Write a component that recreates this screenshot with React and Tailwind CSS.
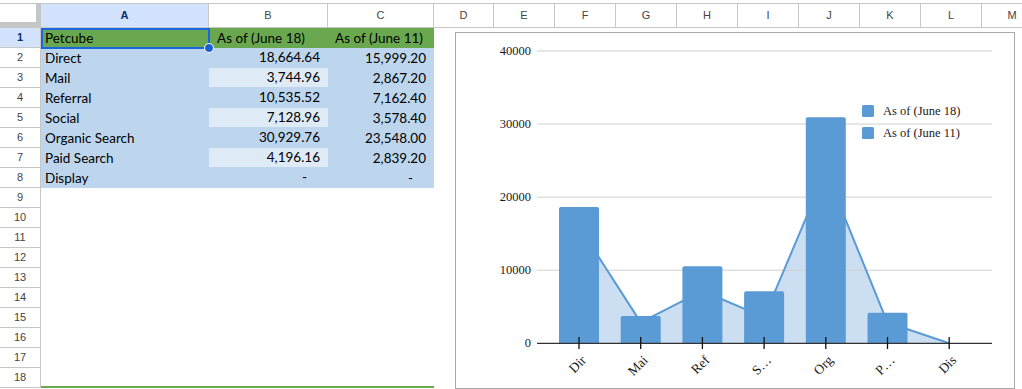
import React from 'react';

const COLS = [
  { id: 'A', w: 'w-[168px]' },
  { id: 'B', w: 'w-[119px]' },
  { id: 'C', w: 'w-[106px]' },
  { id: 'D', w: 'w-[60px]' },
  { id: 'E', w: 'w-[61px]' },
  { id: 'F', w: 'w-[61px]' },
  { id: 'G', w: 'w-[61px]' },
  { id: 'H', w: 'w-[61px]' },
  { id: 'I', w: 'w-[61px]' },
  { id: 'J', w: 'w-[61px]' },
  { id: 'K', w: 'w-[61px]' },
  { id: 'L', w: 'w-[61px]' },
  { id: 'M', w: 'w-[61px]' },
];

const ROWS = [
  { label: 'Direct', b: '18,664.64', c: '15,999.20', light: false },
  { label: 'Mail', b: '3,744.96', c: '2,867.20', light: true },
  { label: 'Referral', b: '10,535.52', c: '7,162.40', light: false },
  { label: 'Social', b: '7,128.96', c: '3,578.40', light: true },
  { label: 'Organic Search', b: '30,929.76', c: '23,548.00', light: false },
  { label: 'Paid Search', b: '4,196.16', c: '2,839.20', light: true },
  { label: 'Display', b: '-', c: '-', light: false, dash: true },
];

// chart data (absolute page coords, translated inside the svg)
const CATS = ['Dir', 'Mai', 'Ref', 'S…', 'Org', 'P…', 'Dis'];
const V18 = [18664.64, 3744.96, 10535.52, 7128.96, 30929.76, 4196.16, 0];
const V11 = [15999.2, 2867.2, 7162.4, 3578.4, 23548, 2839.2, 0];
const BASE = 343.3;
const yOf = (v) => BASE - v * 0.0073075;
const xOf = (i) => 579 + 61.7 * i;

function Chart() {
  const pts = V11.map((v, i) => `${xOf(i)},${yOf(v)}`);
  const area = [...pts, `${xOf(6)},${BASE}`, `${xOf(0)},${BASE}`].join(' ');
  return (
    <div className="absolute left-[455px] top-[32px] w-[560px] h-[357px] bg-white border border-[#a9a9a9]">
      <svg width="558" height="355" className="block">
        <g transform="translate(-456,-33)" fontFamily="'Liberation Serif', serif" fontSize="12.5" fill="#1a1a1a">
          <polygon points={area} fill="#cbdef2" stroke="none" />
          {[40000, 30000, 20000, 10000].map((v) => (
            <line key={v} x1="537" x2="992" y1={yOf(v)} y2={yOf(v)} stroke="#cfcfcf" strokeWidth="1" />
          ))}
          <polyline points={pts.join(' ')} fill="none" stroke="#5b9bd5" strokeWidth="2" strokeLinejoin="round" />
          {V18.map((v, i) => {
            if (!v) return null;
            const x0 = xOf(i) - 20;
            const top = yOf(v);
            return (
              <path key={i} fill="#5b9bd5"
                d={`M${x0},${BASE} L${x0},${top + 2} Q${x0},${top} ${x0 + 2},${top} L${x0 + 38},${top} Q${x0 + 40},${top} ${x0 + 40},${top + 2} L${x0 + 40},${BASE} Z`} />
            );
          })}
          <line x1="537" x2="992" y1={BASE} y2={BASE} stroke="#333" strokeWidth="1.2" />
          {CATS.map((c, i) => (
            <line key={c} x1={xOf(i)} x2={xOf(i)} y1="337" y2="349" stroke="#111" strokeWidth="1.3" />
          ))}
          {[40000, 30000, 20000, 10000, 0].map((v) => (
            <text key={v} x="531" y={yOf(v) + 4} textAnchor="end">{v}</text>
          ))}
          {CATS.map((c, i) => (
            <text key={c} x={xOf(i) + 8} y="361" fontSize="13.5" textAnchor="end" transform={`rotate(-45 ${xOf(i) + 8} 361)`}>{c}</text>
          ))}
          <rect x="862" y="105" width="12" height="12" rx="1.5" fill="#5b9bd5" />
          <text x="883" y="115">As of (June 18)</text>
          <rect x="862" y="127" width="12" height="12" rx="1.5" fill="#5b9bd5" />
          <text x="883" y="137">As of (June 11)</text>
        </g>
      </svg>
    </div>
  );
}

export default function App() {
  const blank = Array.from({ length: 10 }, (_, i) => i + 9);
  return (
    <div className="relative w-[1022px] h-[389px] overflow-hidden bg-white font-['Liberation_Sans',sans-serif]">
      {/* column headers */}
      <div className="pt-[3px]">
        <div className="flex h-[25px] border-y border-[#c4c7c5] text-[11px] text-[#444]">
          <div className="w-[41px] shrink-0 bg-white border-r-[5px] border-b-[5px] border-[#c4c7c5]" />
          {COLS.map((c) => (
            <div key={c.id}
              className={`${c.w} shrink-0 flex items-center justify-center border-r border-[#c4c7c5] ${c.id === 'A' ? 'bg-[#d3e3fd] font-bold text-[#0b2f6b]' : 'bg-white'}`}>
              {c.id}
            </div>
          ))}
        </div>
      </div>

      <div className="flex">
        {/* row numbers */}
        <div className="w-[41px] shrink-0 border-r border-[#c4c7c5] text-[11px] text-[#444]">
          {Array.from({ length: 18 }, (_, i) => i + 1).map((n) => (
            <div key={n}
              className={`h-[20px] flex items-center justify-center border-b border-[#c4c7c5] ${n === 1 ? 'bg-[#d3e3fd] font-bold text-[#0b2f6b]' : ''}`}>
              {n}
            </div>
          ))}
        </div>

        {/* cells */}
        <div className="font-['Lato',sans-serif] text-[13.5px] text-black">
          <div className="relative flex h-[20px] bg-[#6aa84f]">
            <div className="w-[168px] pl-[4px] flex items-center">Petcube</div>
            <div className="w-[119px] pl-[8px] flex items-center">As of (June 18)</div>
            <div className="w-[106px] pl-[7px] flex items-center">As of (June 11)</div>
            <div className="absolute left-0 top-0 w-[169px] h-[21px] border-2 border-[#1a66e0]" />
            <div className="absolute left-[163px] top-[15px] w-[10px] h-[10px] rounded-full bg-[#1a5fd6] border border-white" />
          </div>
          {ROWS.map((r) => (
            <div key={r.label} className="flex h-[20px] bg-[#bdd6ee]">
              <div className="w-[168px] pl-[4px] flex items-center">{r.label}</div>
              <div className={`w-[119px] flex items-center justify-end border-b border-[#bdd6ee] ${r.dash ? 'pr-[21px]' : 'pr-[8px]'} ${r.light ? 'bg-[#deeaf6]' : ''}`}>{r.b}</div>
              <div className={`w-[106px] flex items-center justify-end ${r.dash ? 'pr-[21px]' : 'pr-[8px]'}`}>{r.c}</div>
            </div>
          ))}
          {blank.map((n) => (
            <div key={n} className={`h-[20px] w-[393px] ${n === 18 ? 'border-b-2 border-[#6aa84f]' : ''}`} />
          ))}
        </div>
      </div>

      <Chart />
    </div>
  );
}
